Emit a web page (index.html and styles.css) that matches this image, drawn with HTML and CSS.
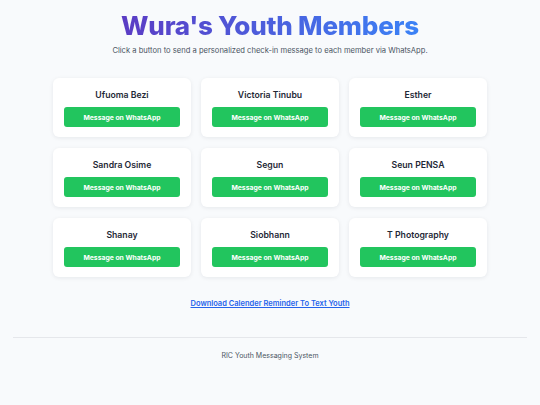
FILE: index.html
```html
<!DOCTYPE html>
<html lang="en">
<head>
<meta charset="utf-8">
<title>Wura's Youth Members</title>
<link rel="stylesheet" href="styles.css">
</head>
<body>
<main class="page">
  <header class="hero">
    <h1 class="title">Wura's Youth Members</h1>
    <p class="subtitle">Click a button to send a personalized check-in message to each member via WhatsApp.</p>
  </header>
  <section class="grid">
    <div class="card"><h2 class="name">Ufuoma Bezi</h2><a class="btn" href="#">Message on WhatsApp</a></div>
    <div class="card"><h2 class="name">Victoria Tinubu</h2><a class="btn" href="#">Message on WhatsApp</a></div>
    <div class="card"><h2 class="name">Esther</h2><a class="btn" href="#">Message on WhatsApp</a></div>
    <div class="card"><h2 class="name">Sandra Osime</h2><a class="btn" href="#">Message on WhatsApp</a></div>
    <div class="card"><h2 class="name">Segun</h2><a class="btn" href="#">Message on WhatsApp</a></div>
    <div class="card"><h2 class="name">Seun PENSA</h2><a class="btn" href="#">Message on WhatsApp</a></div>
    <div class="card"><h2 class="name">Shanay</h2><a class="btn" href="#">Message on WhatsApp</a></div>
    <div class="card"><h2 class="name">Siobhann</h2><a class="btn" href="#">Message on WhatsApp</a></div>
    <div class="card"><h2 class="name">T Photography</h2><a class="btn" href="#">Message on WhatsApp</a></div>
  </section>
  <div class="download">
    <a class="download-link" href="#">Download Calender Reminder To Text Youth</a>
  </div>
  <footer class="footer">
    <p class="footer-text">RIC Youth Messaging System</p>
  </footer>
</main>
</body>
</html>
```

FILE: styles.css
```css
* { box-sizing: border-box; }
html, body { margin: 0; padding: 0; }
body {
  background: #f8fafc;
  font-family: Inter, "Noto Sans", "Liberation Sans", sans-serif;
  color: #1f2937;
}
.page {
  padding: 0 13px;
}
.hero {
  text-align: center;
  padding-top: 9px;
}
.title {
  margin: 0;
  font-size: 26px;
  font-weight: 800;
  line-height: 34px;
  letter-spacing: -0.2px;
  background: linear-gradient(90deg, #5b3cc4 0%, #3b82f6 100%);
  -webkit-background-clip: text;
  background-clip: text;
  color: transparent;
  display: inline-block;
}
.subtitle {
  margin: 2px 0 0;
  font-size: 7.6px;
  line-height: 12px;
  color: #4b5563;
}
.grid {
  width: 434px;
  margin: 21px auto 0;
  display: grid;
  grid-template-columns: repeat(3, 1fr);
  column-gap: 10px;
  row-gap: 11px;
}
.card {
  background: #ffffff;
  border-radius: 6px;
  box-shadow: 0 1px 4px rgba(15, 23, 42, 0.08);
  height: 59px;
  padding: 11px 11px 0;
  display: flex;
  flex-direction: column;
  align-items: stretch;
}
.name {
  margin: 0;
  text-align: center;
  font-size: 8.7px;
  line-height: 12px;
  font-weight: 600;
  color: #1f2937;
}
.btn {
  margin-top: 6px;
  height: 20px;
  display: flex;
  align-items: center;
  justify-content: center;
  background: #22c55e;
  color: #ffffff;
  border-radius: 3px;
  font-size: 6.8px;
  font-weight: 700;
  text-decoration: none;
}
.download {
  text-align: center;
  margin-top: 13px;
}
.download-link {
  font-size: 7.5px;
  font-weight: 600;
  color: #2563eb;
  text-decoration: underline;
}
.footer {
  margin-top: 27px;
  border-top: 1px solid #e5e7eb;
  text-align: center;
}
.footer-text {
  margin: 13px 0 0;
  font-size: 7px;
  color: #4b5563;
}
```
